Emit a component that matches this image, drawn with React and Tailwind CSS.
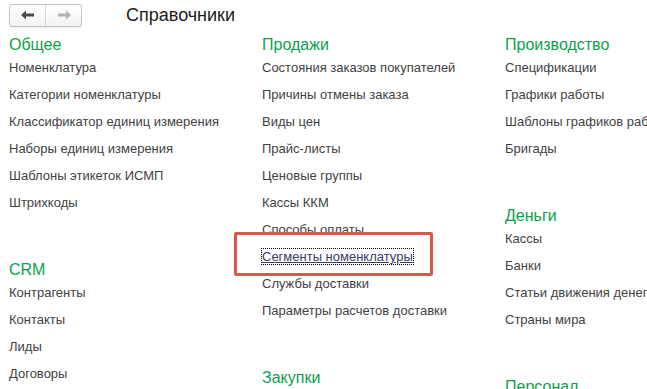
import React from 'react';

const columns = [
  {
    width: 'w-[253px]',
    groups: [
      {
        title: 'Общее',
        items: [
          'Номенклатура',
          'Категории номенклатуры',
          'Классификатор единиц измерения',
          'Наборы единиц измерения',
          'Шаблоны этикеток ИСМП',
          'Штрихкоды',
        ],
      },
      { title: 'CRM', items: ['Контрагенты', 'Контакты', 'Лиды', 'Договоры'] },
    ],
  },
  {
    width: 'w-[243px]',
    groups: [
      {
        title: 'Продажи',
        items: [
          'Состояния заказов покупателей',
          'Причины отмены заказа',
          'Виды цен',
          'Прайс-листы',
          'Ценовые группы',
          'Кассы ККМ',
          'Способы оплаты',
          'Сегменты номенклатуры',
          'Службы доставки',
          'Параметры расчетов доставки',
        ],
      },
      { title: 'Закупки', items: [] },
    ],
  },
  {
    width: 'w-[200px]',
    groups: [
      {
        title: 'Производство',
        items: ['Спецификации', 'Графики работы', 'Шаблоны графиков работы', 'Бригады'],
      },
      { title: 'Деньги', items: ['Кассы', 'Банки', 'Статьи движения денег', 'Страны мира'] },
      { title: 'Персонал', items: [] },
    ],
  },
];

const Arrow = ({ dir, color }) => (
  <svg width="14" height="10" viewBox="0 0 14 10">
    {dir === 'left' ? (
      <path d="M0 5 L5 0.5 L5 3.5 L13 3.5 L13 6.5 L5 6.5 L5 9.5 Z" fill={color} />
    ) : (
      <path d="M14 5 L9 0.5 L9 3.5 L1 3.5 L1 6.5 L9 6.5 L9 9.5 Z" fill={color} />
    )}
  </svg>
);

export default function App() {
  return (
    <div className="relative w-[647px] h-[389px] overflow-hidden bg-white font-['Liberation_Sans',Arial,sans-serif]">
      <div className="flex items-center h-[29px] pl-[9px] pt-[1px]">
        <div className="flex h-[23px] w-[73px] rounded-[3px] border border-[#c4c4c4] bg-gradient-to-b from-white to-[#f2f2f2] shadow-[0_1px_1px_rgba(0,0,0,0.08)]">
          <div className="flex flex-1 items-center justify-center border-r border-[#d6d6d6]">
            <Arrow dir="left" color="#4a4a4a" />
          </div>
          <div className="flex flex-1 items-center justify-center">
            <Arrow dir="right" color="#b3b3b3" />
          </div>
        </div>
        <div className="ml-[44px] text-[18px] leading-[22px] text-[#1a1a1a]">Справочники</div>
      </div>

      <div className="flex pl-[9px] pt-[7px]">
        {columns.map((col, ci) => (
          <div key={ci} className={`${col.width} shrink-0 flex flex-col gap-[45px]`}>
            {col.groups.map((g) => (
              <div key={g.title}>
                <div className="text-[16px] leading-[18px] text-[#0c9f4d] whitespace-nowrap">{g.title}</div>
                {g.items.map((it) => (
                  <div key={it} className="h-[27px] flex items-center text-[13px] text-[#424242] whitespace-nowrap">
                    {it === 'Сегменты номенклатуры' ? (
                      <span className="underline outline-1 outline-dotted outline-black leading-[15px] text-[#3c3c5c]">
                        {it}
                      </span>
                    ) : (
                      it
                    )}
                  </div>
                ))}
              </div>
            ))}
          </div>
        ))}
      </div>

      <div className="absolute left-[234px] top-[232px] w-[199px] h-[44px] rounded-[2px] border-[3px] border-[#d9574b]" />
    </div>
  );
}
